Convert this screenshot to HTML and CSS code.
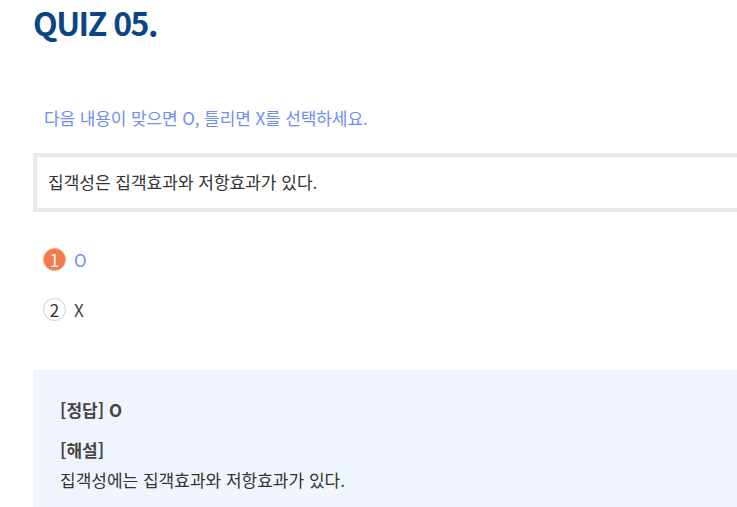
FILE: index.html
```html
<!DOCTYPE html>
<html lang="ko">
<head>
<meta charset="utf-8">
<link rel="stylesheet" href="styles.css">
</head>
<body>
<main class="quiz">
  <h1 class="quiz-title">QUIZ 05.</h1>
  <p class="quiz-instruction">다음 내용이 맞으면 O, 틀리면 X를 선택하세요.</p>
  <div class="quiz-question">집객성은 집객효과와 저항효과가 있다.</div>
  <ul class="quiz-options">
    <li class="option selected"><span class="option-num">1</span><span class="option-label">O</span></li>
    <li class="option"><span class="option-num">2</span><span class="option-label">X</span></li>
  </ul>
  <section class="quiz-answer">
    <p class="answer-head">[정답] O</p>
    <p class="answer-head explain-head">[해설]</p>
    <p class="answer-body">집객성에는 집객효과와 저항효과가 있다.</p>
  </section>
</main>
</body>
</html>
```
FILE: styles.css
```css
html, body {
  margin: 0;
  padding: 0;
  background: #fff;
  overflow: hidden;
}
body {
  font-family: "Noto Sans CJK KR", "Noto Sans", sans-serif;
  color: #333;
}
.quiz {
  padding-left: 33px;
}
.quiz-title {
  margin: 0;
  font-size: 32px;
  line-height: 44px;
  font-weight: 700;
  color: #0c4584;
  letter-spacing: -1.5px;
}
.quiz-instruction {
  margin: 62px 0 0 11px;
  font-size: 17px;
  line-height: 24px;
  color: #6e8ef2;
  letter-spacing: -0.1px;
}
.quiz-question {
  margin: 23px -40px 0 0;
  border: 4px solid #e9e9e9;
  padding: 0 11px;
  height: 51px;
  line-height: 50px;
  font-size: 17px;
  color: #333;
}
.quiz-options {
  list-style: none;
  margin: 36px 0 0 10px;
  padding: 0;
  display: flex;
  flex-direction: column;
  gap: 28px;
}
.option {
  display: flex;
  align-items: center;
  gap: 8px;
  height: 22px;
}
.option-num {
  width: 21px;
  height: 21px;
  border-radius: 50%;
  border: 1px solid #cfcfcf;
  background: #fff;
  color: #333;
  font-size: 17px;
  line-height: 21px;
  text-align: center;
}
.option-label {
  font-size: 17px;
  color: #444;
}
.option.selected .option-num {
  background: #f5784b;
  border-color: #f7a98c;
  color: #fff;
}
.option.selected .option-label {
  color: #6e8ef2;
}
.quiz-answer {
  margin: 50px -40px 0 0;
  background: #f0f5fd;
  padding: 27px 27px 20px;
  height: 120px;
}
.answer-head {
  margin: 0;
  font-size: 17px;
  line-height: 26px;
  font-weight: 700;
  color: #444;
}
.explain-head {
  margin-top: 14px;
}
.answer-body {
  margin: 4px 0 0;
  font-size: 17px;
  line-height: 26px;
  color: #333;
}
```
